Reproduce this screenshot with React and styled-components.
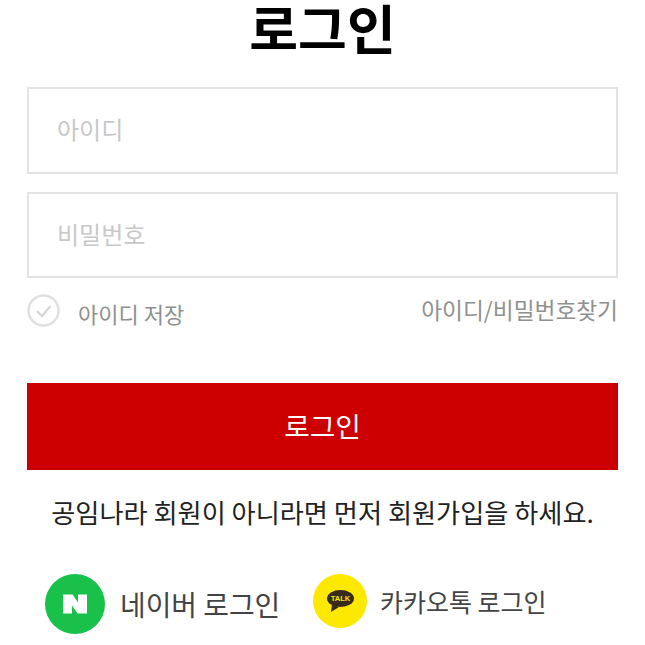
import React from "react";
import styled, { createGlobalStyle } from "styled-components";

const Global = createGlobalStyle`
    html, body {
        margin: 0;
        padding: 0;
        background: #fff;
        overflow: hidden;
    }
    * {
        box-sizing: border-box;
    }
`;

const Page = styled.div`
    width: 645px;
    height: 645px;
    overflow: hidden;
    padding: 0 27px;
    font-family: "Noto Sans CJK KR", "Noto Sans", sans-serif;
`;

const Title = styled.h1`
    margin: 0;
    height: 87px;
    font-size: 53px;
    line-height: 55px;
    font-weight: 700;
    color: #000;
    text-align: center;
`;

const Field = styled.input`
    display: block;
    width: 591px;
    height: ${(p) => p.$height}px;
    margin-bottom: 18px;
    padding: 0 28px 4px;
    border: 2px solid #e3e3e3;
    background: #fff;
    font-family: inherit;
    font-size: 24px;
    outline: none;

    &::placeholder {
        color: #c8c8c8;
        opacity: 1;
    }
`;

const OptionRow = styled.div`
    display: flex;
    align-items: center;
    justify-content: space-between;
    height: 34px;
    margin-top: -1px;
`;

const SaveId = styled.label`
    display: flex;
    align-items: center;
    gap: 18px;
    padding-top: 2px;
    font-size: 22px;
    color: #909090;

    svg {
        margin-bottom: 6px;
    }
`;

const FindLink = styled.a`
    font-size: 22.7px;
    color: #909090;
    margin-top: -5px;
`;

const LoginButton = styled.button`
    display: block;
    width: 591px;
    height: 87px;
    margin-top: 54px;
    padding-bottom: 4px;
    border: 0;
    background: #cc0000;
    color: #fff;
    font-family: inherit;
    font-size: 27.8px;
`;

const Notice = styled.p`
    margin: 24px 0 0;
    font-size: 26.2px;
    line-height: 36px;
    color: #222;
    text-align: center;
    white-space: nowrap;
`;

const SocialRow = styled.div`
    display: flex;
    align-items: flex-start;
    margin-top: 44px;
    padding-left: 18px;
`;

const SocialLink = styled.a`
    display: flex;
    align-items: center;
    gap: ${(p) => p.$gap}px;
    width: ${(p) => p.$width}px;
    font-size: ${(p) => p.$size}px;
    color: #444;
    white-space: nowrap;
`;

const CheckIcon = () => (
    <svg width="33" height="33" viewBox="0 0 33 33" fill="none">
        <circle cx="16.5" cy="16.5" r="15" stroke="#e0e0e0" strokeWidth="2.4" />
        <path d="M10 17l5 5 8.5-10" stroke="#d4d4d4" strokeWidth="2" />
    </svg>
);

const NaverIcon = () => (
    <svg width="60" height="60" viewBox="0 0 60 60">
        <circle cx="30" cy="30" r="30" fill="#19c14a" />
        <path d="M18 20.500h9.500l5.500 8v-8h9v19h-9.500l-5.500-8v8h-9z" fill="#fff" />
    </svg>
);

const KakaoIcon = () => (
    <svg width="54" height="54" viewBox="0 0 54 54">
        <circle cx="27" cy="27" r="27" fill="#fde800" />
        <ellipse cx="27.500" cy="24.500" rx="13.500" ry="8.500" fill="#3a2a1c" />
        <path d="M19 30l-1 8 8-5z" fill="#3a2a1c" />
        <text x="27.500" y="27" fontSize="7.500" fontWeight="700" fill="#fde800" textAnchor="middle" fontFamily="Liberation Sans, sans-serif">TALK</text>
    </svg>
);

const App = () => {
    return (
        <Page>
            <Global />
            <Title>로그인</Title>
            <Field $height={87} placeholder="아이디" />
            <Field $height={86} placeholder="비밀번호" />
            <OptionRow>
                <SaveId><CheckIcon />아이디 저장</SaveId>
                <FindLink>아이디/비밀번호찾기</FindLink>
            </OptionRow>
            <LoginButton>로그인</LoginButton>
            <Notice>공임나라 회원이 아니라면 먼저 회원가입을 하세요.</Notice>
            <SocialRow>
                <SocialLink $gap={15} $width={268} $size={27.9}><NaverIcon />네이버 로그인</SocialLink>
                <SocialLink $gap={13} $width={250} $size={25}><KakaoIcon />카카오톡 로그인</SocialLink>
            </SocialRow>
        </Page>
    );
}

export default App;
